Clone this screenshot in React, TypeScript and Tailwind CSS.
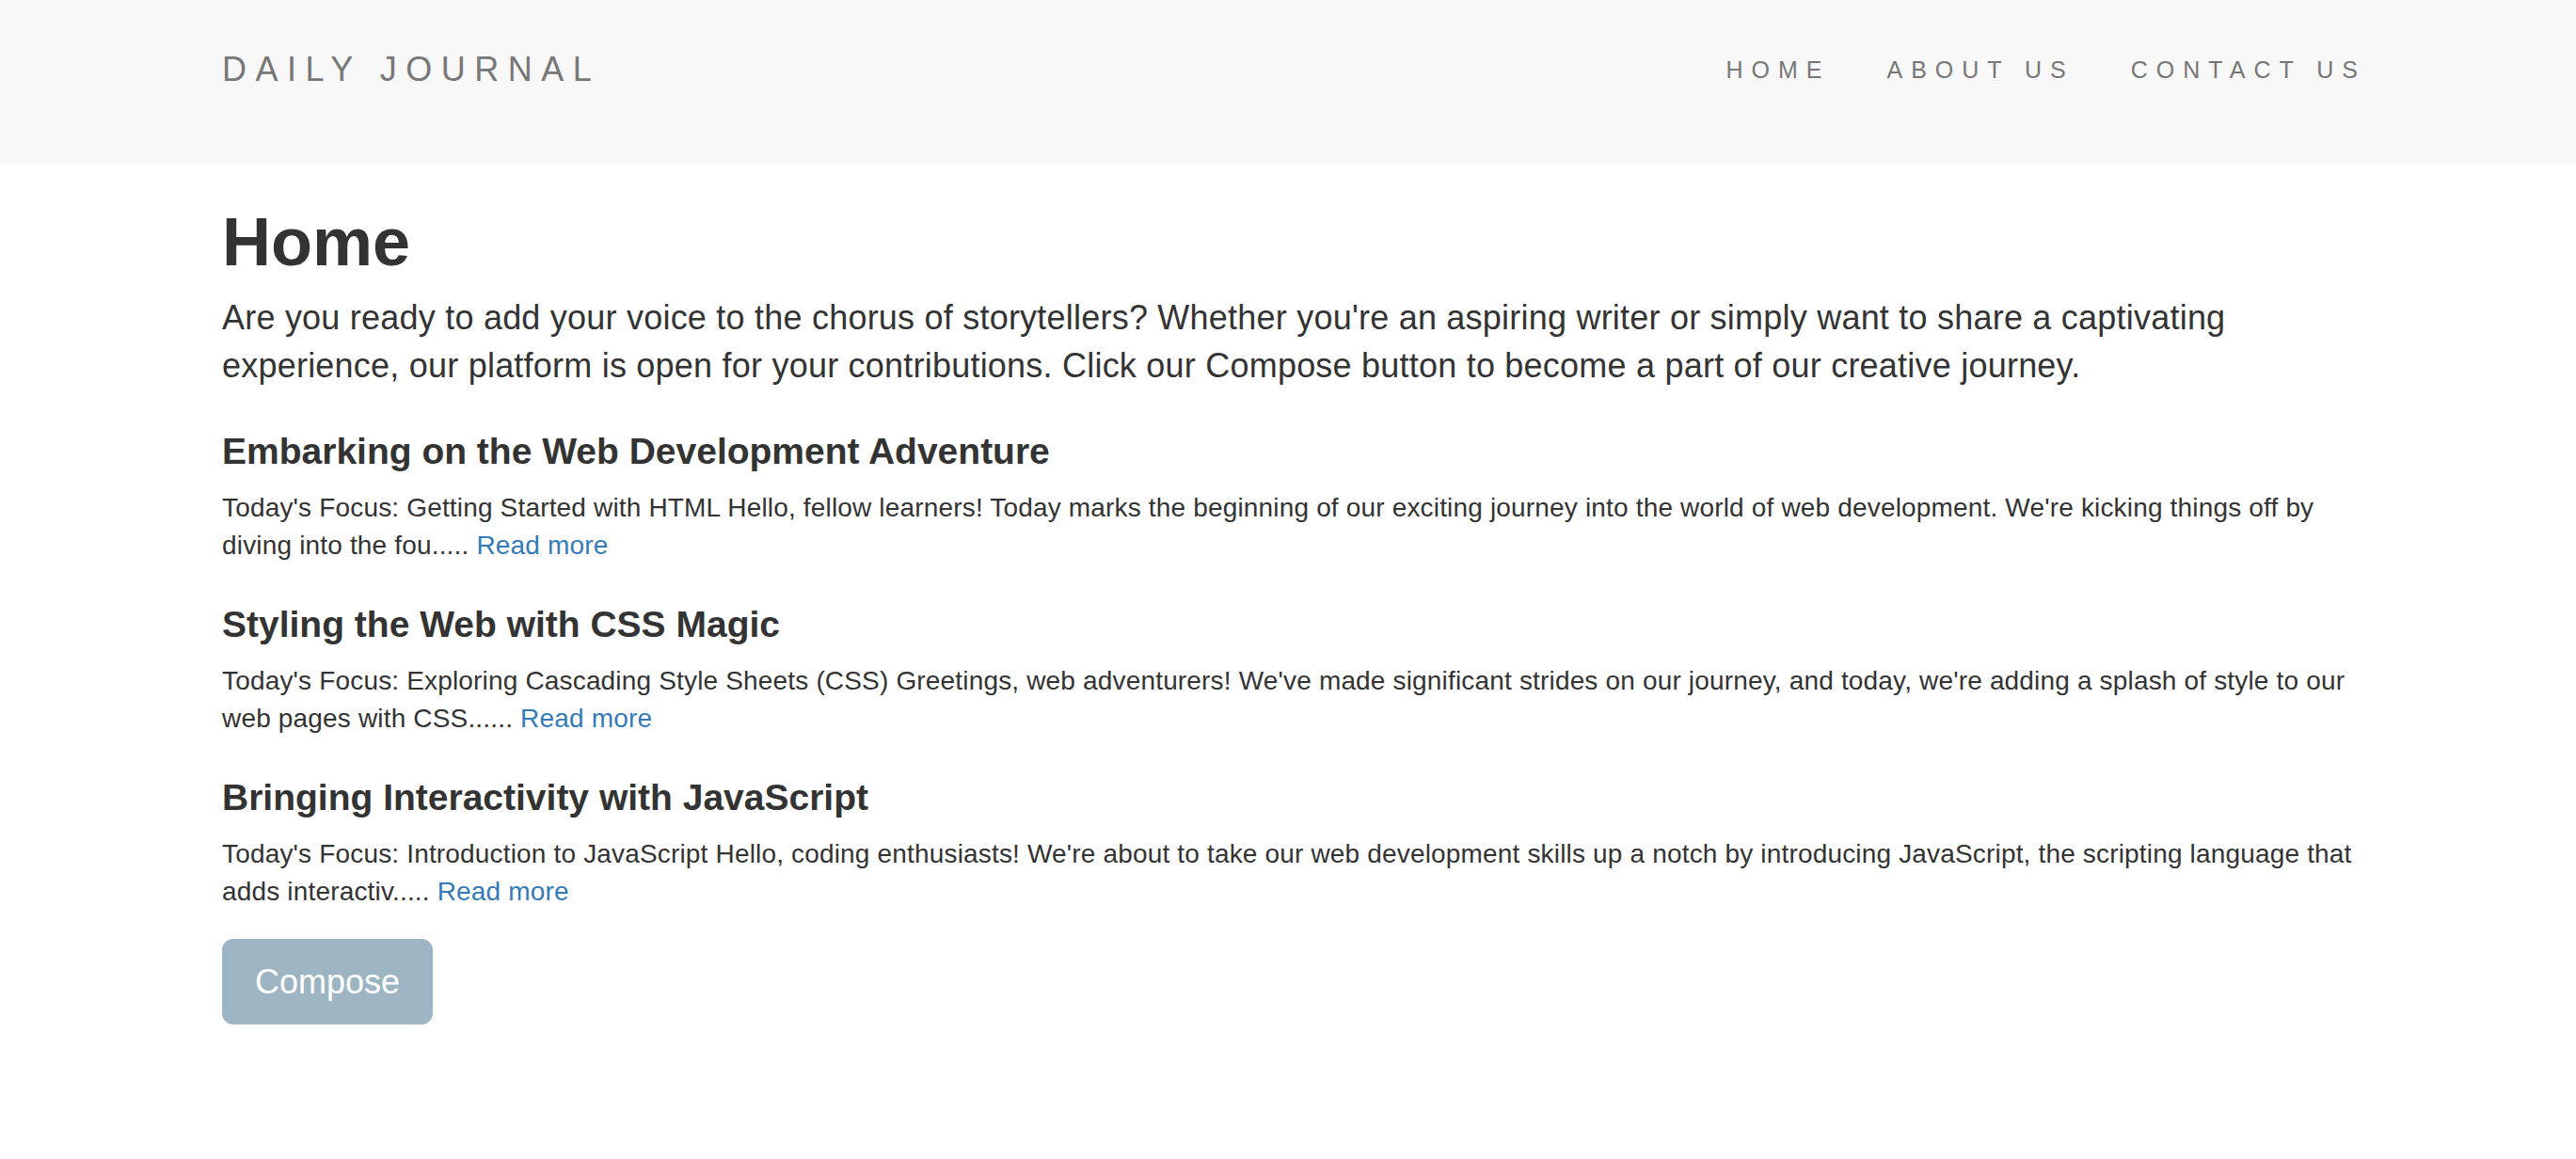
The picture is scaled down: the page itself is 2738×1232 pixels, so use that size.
import React from "react";

const posts = [
  {
    title: "Embarking on the Web Development Adventure",
    body: "Today's Focus: Getting Started with HTML Hello, fellow learners! Today marks the beginning of our exciting journey into the world of web development. We're kicking things off by diving into the fou.....",
  },
  {
    title: "Styling the Web with CSS Magic",
    body: "Today's Focus: Exploring Cascading Style Sheets (CSS) Greetings, web adventurers! We've made significant strides on our journey, and today, we're adding a splash of style to our web pages with CSS......",
  },
  {
    title: "Bringing Interactivity with JavaScript",
    body: "Today's Focus: Introduction to JavaScript Hello, coding enthusiasts! We're about to take our web development skills up a notch by introducing JavaScript, the scripting language that adds interactiv.....",
  },
];

export default function App() {
  return (
    <div className="min-h-screen bg-white text-[#333] font-['Liberation_Sans',Arial,Helvetica,sans-serif]">
      <header className="h-[174px] bg-[#f8f8f8]">
        <div className="flex h-[148px] items-center justify-between pl-[236px] pr-[223px]">
          <a className="text-[36px] leading-none tracking-[9.5px] text-[#777]">DAILY JOURNAL</a>
          <nav className="flex gap-[60px] text-[25px] leading-none tracking-[9px] text-[#777]">
            <a>HOME</a>
            <a>ABOUT US</a>
            <a>CONTACT US</a>
          </nav>
        </div>
      </header>
      <main className="pl-[236px] pr-[222px]">
        <h1 className="mt-[44px] text-[72px] font-bold leading-[79px]">Home</h1>
        <p className="mt-[15px] text-[36px] leading-[51.4px] tracking-[0.22px]">
          Are you ready to add your voice to the chorus of storytellers? Whether you're an aspiring writer or simply want to share a captivating experience, our platform is open for your contributions. Click our Compose button to become a part of our creative journey.
        </p>
        <div className="mt-[43px] flex flex-col gap-[42px]">
          {posts.map((p) => (
            <section key={p.title}>
              <h3 className="text-[39px] font-bold leading-[43px]">{p.title}</h3>
              <p className="mt-[19px] text-[28px] leading-[40px] tracking-[0.17px]">
                {p.body} <a className="text-[#337ab7]">Read more</a>
              </p>
            </section>
          ))}
        </div>
        <button className="mt-[30px] rounded-[12px] border-2 border-[#9db5c3] bg-[#9db5c3] px-[33px] py-[20px] text-[36px] leading-[47px] text-white">
          Compose
        </button>
      </main>
    </div>
  );
}
